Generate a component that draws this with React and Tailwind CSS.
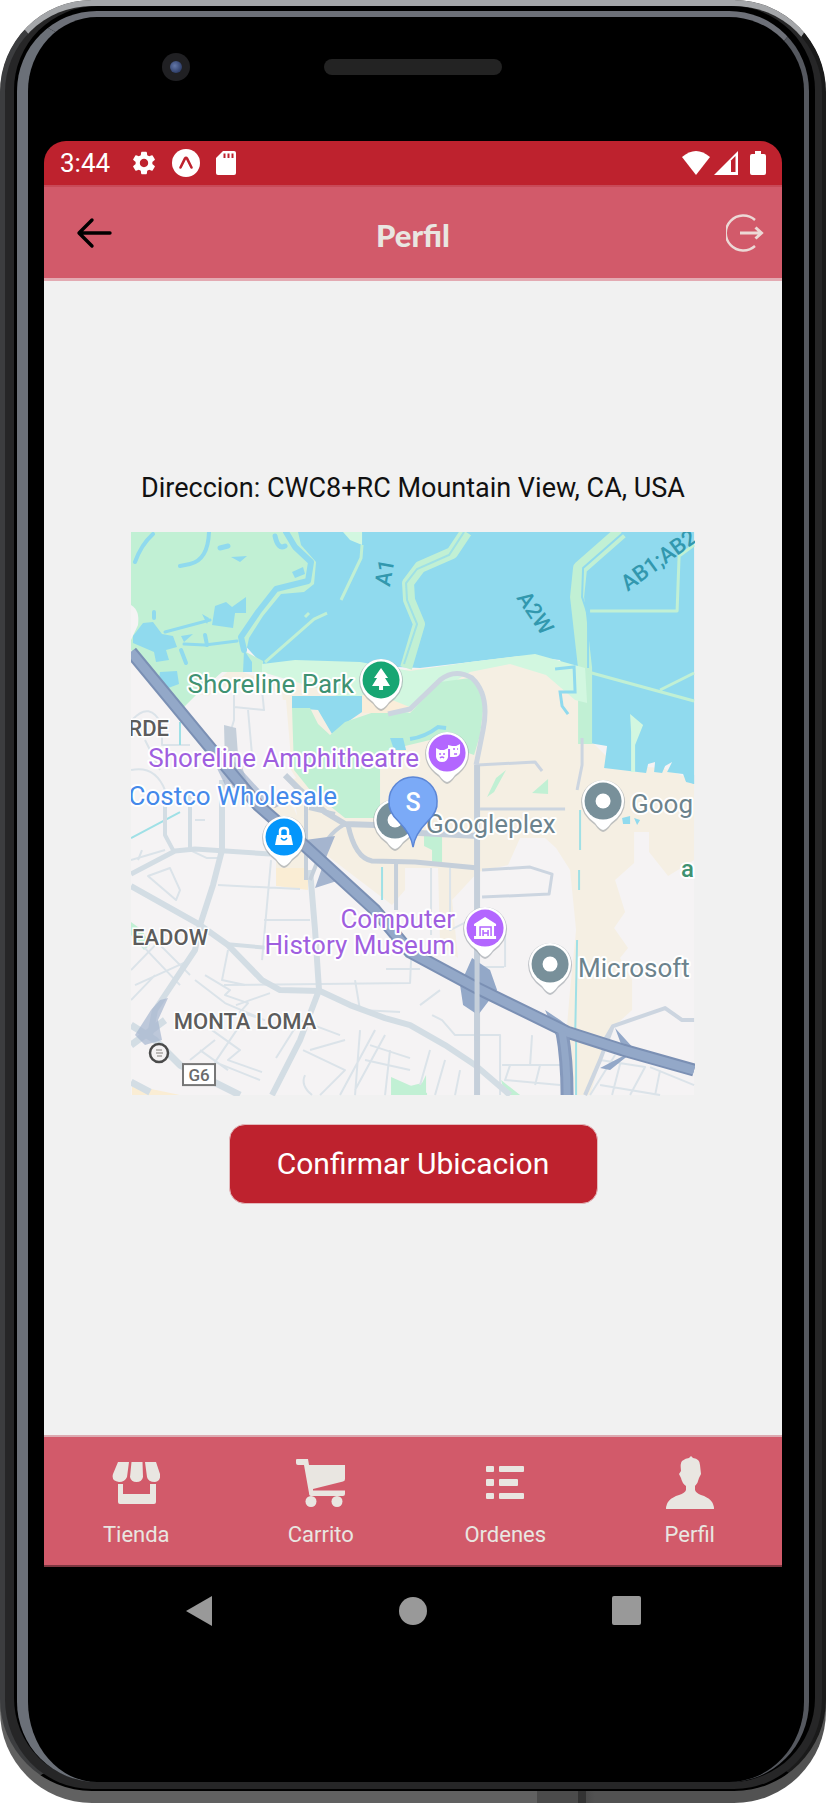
import React from "react";
import { MdSettings } from "react-icons/md";

function StatusBar() {
  return (
    <div className="flex h-11 items-center justify-between bg-[#be222e] px-4 text-white">
      <div className="flex items-center">
        <span className="text-[26px] leading-8">3:44</span>
        <MdSettings className="ml-5 size-7" aria-hidden="true" />
        <svg className="ml-3.5 size-7" viewBox="0 0 28 28" aria-hidden="true">
          <circle cx="14" cy="14" r="14" fill="#fff" />
          <path d="M8.500 18.500 L13 9.500 Q14 8 15 9.500 L19.500 18.500" fill="none" stroke="#be222e" strokeWidth="2.600" strokeLinecap="round" />
        </svg>
        <svg className="ml-4 h-6 w-5" viewBox="0 0 20 24" aria-hidden="true">
          <path d="M7 0H18Q20 0 20 2V22Q20 24 18 24H2Q0 24 0 22V7Z" fill="#fff" />
          <path d="M8.500 2.500V7M12.500 2.500V7M16.500 2.500V7" stroke="#be222e" strokeWidth="2" />
        </svg>
      </div>
      <div className="flex items-center">
        <svg className="h-6 w-7" viewBox="0 0 28 24" aria-hidden="true">
          <path d="M0 6Q14 -6 28 6L14 24Z" fill="#fff" />
        </svg>
        <svg className="ml-1 size-6" viewBox="0 0 24 24" aria-hidden="true">
          <path d="M24 0V24H0Z" fill="#fff" />
          <path d="M17 9.500L21.500 5V21H17Z" fill="#be222e" />
        </svg>
        <svg className="ml-3 h-6 w-4" viewBox="0 0 16 24" aria-hidden="true">
          <path d="M5 0H11V3H14Q16 3 16 5V22Q16 24 14 24H2Q0 24 0 22V5Q0 3 2 3H5Z" fill="#fff" />
        </svg>
      </div>
    </div>
  );
}

function Header() {
  return (
    <header className="grid h-24 grid-cols-[1fr_auto_1fr] items-center border-t-2 border-b-3 border-t-[#c84a58] border-b-[#e3aab2] bg-[#d25a6a] px-4">
      <button type="button" aria-label="Volver" className="ml-4 justify-self-start">
        <svg className="h-8 w-9" viewBox="0 0 36 32">
          <path d="M34 16H4M16 3L3 16L16 29" fill="none" stroke="#000" strokeWidth="3.400" strokeLinecap="round" strokeLinejoin="round" />
        </svg>
      </button>
      <h1 className="pt-1 font-['Lato'] text-[31px] leading-9 font-black text-[#e9e6e1]">Perfil</h1>
      <button type="button" aria-label="Cerrar sesión" className="justify-self-end">
        <svg className="size-10" viewBox="0 0 40 40">
          <path d="M29 7A17.500 17.500 0 1 0 29 33" fill="none" stroke="#ecd9d6" strokeWidth="2.400" />
          <path d="M14 20H35M29.500 14.500L35.500 20L29.500 25.500" fill="none" stroke="#ecd9d6" strokeWidth="3" />
        </svg>
      </button>
    </header>
  );
}

function Pin({ x, y, color, children }) {
  return (
    <g transform={`translate(${x} ${y})`}>
      <path d="M0 31Q-4 30 -8 24Q-22 14 -22 1A22 22 0 1 1 22 1Q22 14 8 24Q4 30 0 31Z" fill="#9aa0a6" opacity="0.600" />
      <path d="M0 29Q-4 28 -8 22Q-21 13 -21 0A21 21 0 1 1 21 0Q21 13 8 22Q4 28 0 29Z" fill="#fff" />
      <circle r="18.500" fill={color} />
      {children}
    </g>
  );
}

function MapView() {
  return (
    <svg
      role="img"
      aria-label="Mapa de Mountain View"
      viewBox="131 532 563 563"
      className="mt-7 block w-[76.300%] font-['Roboto',sans-serif]"
    >
      <rect x="131" y="532" width="563" height="563" fill="#f5f3f4" />

      {/* Commercial and campus ground */}
      <g fill="#f5efe3">
        <path d="M292 690L300 672L380 672L470 664L520 654L590 690L585 735L615 765L662 768L694 780V860L668 876L649 852V832H634V863L615 880L625 912L614 928L628 948L620 958L632 980V1010L610 1030L590 1095H575L567 1025L570 990L576 930L570 870L556 848L545 838H520L508 865L478 872L452 900L458 958L440 945L438 868H405V890L392 905L300 835L290 770Z" />
        <path d="M256 808L276 820V868L308 890V840L290 800Z" />
        <path d="M200 695L232 668L292 690V770L286 700Z" />
      </g>
      <path d="M276 868H308V890L276 886Z" fill="#faedd4" />
      <path d="M205 700L218 686L282 692L288 765L296 778L250 800L196 735L184 706Z" fill="#f5f3f4" />
      <path d="M132 1085L180 1095H132Z" fill="#faedd4" />

      {/* Bay */}
      <path d="M240 532H694V784L686 782L683 774L667 772L672 762L665 766L662 773L654 772L655 762L648 764L646 773L604 768L607 746L583 742L585 705L566 680L560 660L520 656L420 668L330 664L262 664L240 640Z" fill="#90daee" />
      {/* Marshes west */}
      <path d="M131 532H298L301 545L316 562L314 584L304 592L281 594L263 616L249 638L246 652L263 661V672H222L195 696L184 707L131 650Z" fill="#c1f0d4" />
      <path d="M131 605Q140 610 138 625L131 640Z" fill="#f5f3f4" />
      <g fill="none" stroke="#90daee" strokeLinecap="round" strokeLinejoin="round">
        <path d="M286 532L295 547L311 562L308 581L276 589L258 612L241 637L244 650" strokeWidth="6" />
        <path d="M135 562Q141 545 153 534" strokeWidth="4" />
        <path d="M209 532Q208 560 190 564L180 566" strokeWidth="4" />
        <path d="M237 641L205 645L184 644M165 632L210 620" strokeWidth="3" />
        <path d="M275 536Q278 550 285 546M220 548L228 546" strokeWidth="5" />
        <path d="M154 612V618M181 650L186 663M205 635L207 645" strokeWidth="4" />
      </g>
      <g fill="#90daee">
        <path d="M215 606L226 602L232 607L246 597V613H235L233 628L212 625Z" />
        <path d="M133 636L143 623L153 622L162 634L173 636L177 647L166 650L169 660L156 662L154 652L133 643Z" />
        <path d="M160 672L177 671L179 684L163 690L158 684Z" />
        <path d="M231 557L247 556L240 562ZM181 636L193 634L184 642ZM202 614L209 618L207 624Z" />
      </g>
      {/* Levees */}
      <path d="M292 572L303 567L305 574L295 578Z" fill="#90daee" />
      <g fill="none" stroke="#c1f0d4" strokeLinejoin="round">
        <path d="M362 545L361 558L341 600M327 613L314 619L265 662" strokeWidth="3" />
        <path d="M305 617L309 613" strokeWidth="3" />
        <path d="M466 532L452 553L420 567L408 583L409 600L419 624L406 668" strokeWidth="12" />
        <path d="M621 532L580 568L577 597L585 668V744" strokeWidth="14" />
        <path d="M590 611H677L679 556L694 545M588 672L694 701M660 690L694 673" strokeWidth="3" />
      </g>
      <g fill="none" stroke="#90daee" strokeWidth="2">
        <path d="M464 532L449 555L417 569L406 583L407 600L417 624L404 664" opacity="0.700" />
        <path d="M624 532L583 568L582 597L588 615V668M582 675V700" />
      </g>
      <path d="M343 532H362V545L350 540Z" fill="#d2f7e0" />
      <path d="M630 714L643 725L635 745V772H631V732Z" fill="#d2f7e0" />

      {/* Parks along the shore */}
      <path d="M262 664L295 660L360 662L410 671L470 662L535 654L585 668L587 703L575 700L546 675L510 664L470 672L440 690L405 715L360 710L330 692L262 672Z" fill="#d2f7e0" />
      <path d="M244 650L252 662V672H243Z" fill="#90daee" />
      <path d="M292 696H362V712L346 723L332 734L318 710L292 708Z" fill="#90daee" />
      <path d="M292 708L310 708L318 724L330 735L345 722L380 710L410 713L440 682L470 678L485 695L480 735L474 755L430 740L380 752V818L345 818L310 790L294 770Z" fill="#c1f0d4" />
      <path d="M362 695H380L412 708L400 713L362 713Z" fill="#faedd9" />
      <path d="M390 738H403L406 750H394Z" fill="#90daee" />
      <path d="M410 739Q425 737 438 727L446 728" fill="none" stroke="#90daee" strokeWidth="4" />
      <path d="M555 669L574 667L575 692H560L562 706L568 714" fill="none" stroke="#90daee" strokeWidth="3" />
      <g fill="#c1f0d4">
        <path d="M424 836H442V862H432V850L424 846Z" />
        <path d="M487 797L496 778L506 770L494 792ZM532 793L548 779V794Z" />
        <path d="M391 1077L427 1093V1095H391ZM410 1086L422 1083L426 1075V1095H410ZM501 1080L520 1095H505Z" />
        <path d="M131 922L142 930L150 945L144 950L131 935Z" />
      </g>
      <path d="M622 818L630 816V824H623ZM634 818L640 820L637 825ZM685 780L694 775V784Z" fill="#90daee" />

      {/* Small streets */}
      <g fill="none" stroke="#dbe3e9" strokeWidth="2" strokeLinejoin="round">
        <path d="M234 690V720L222 760M234 707L264 710L262 690M248 710L252 755L232 780" />
        <path d="M132 720Q150 700 162 725V745H190M131 770Q155 765 165 790M145 740L160 770" />
        <path d="M271 860L262 960M218 885L300 889M264 920H310M224 985L410 983L412 938M131 860L165 850" />
        <path d="M148 876L170 868L180 890L176 900ZM138 860L142 850M190 792V850L207 858H220M195 820H205" />
        <path d="M131 970L165 935M135 985L190 960M142 945L180 985M131 1000L155 975M160 945L190 975" />
        <path d="M205 975L230 990L225 995L248 1003L240 1012L265 1020M195 980L225 1003L260 1018M228 950L222 980L245 985M236 1005L270 993M212 1030L240 1050L228 1060L262 1072M200 1050L228 1070M240 1025L215 1062L260 1080M190 1060L215 1040" />
        <path d="M276 1058L300 1020L340 1035M303 1050L345 1070L320 1095M305 1075Q300 1085 312 1095M345 1040L310 1050M360 1030L355 1095M375 1030L340 1095M385 1035L355 1090M370 1045L410 1058M365 1060L410 1070" />
        <path d="M355 980L360 1010L400 1012M386 969H420M390 1050L385 1095M420 1005L440 990M432 1015L442 1020L455 1035H500V1095M532 1035L530 1065M502 1065H560M430 1050L420 1085M445 1060L435 1095M460 1070L455 1095M510 1065L505 1080L560 1085M540 1065L535 1085" />
        <path d="M431 935V868M450 868V930L470 920M505 967V925M480 967H504" />
        <path d="M600 1060L645 1067L630 1095M615 1055L590 1095M650 1067L694 1085M600 1085L660 1095M660 1070L655 1095M620 1064L612 1095" />
      </g>
      <g fill="none" stroke="#ccd5e0" strokeLinejoin="round">
        <path d="M482 870L530 867L552 874L549 894L482 897" strokeWidth="3" />
        <path d="M477 765L535 762L542 771M480 809H565" strokeWidth="3" />
        <path d="M388 714L410 709L440 680Q455 668 472 678Q490 695 483 730L476 765" strokeWidth="5" />
        <path d="M582 738V765L577 790" strokeWidth="3" />
        <path d="M600 1048L613 1026L665 1008L682 1020L694 1020M612 1028L600 1060L585 1095" strokeWidth="4" />
      </g>
      <g fill="none" stroke="#9fe0e6" strokeWidth="2">
        <path d="M131 838L180 812M382 867V900M580 810V850M579 870V890M577 940L575 1040M576 1040V1095M180 722V745" />
      </g>

      {/* Arterials */}
      <g fill="none" stroke="#d3dde4" strokeLinejoin="round">
        <path d="M131 874L175 851L195 849L270 854" strokeWidth="5" />
        <path d="M222 780V850L213 885L200 925L195 950L155 1010L150 1035" strokeWidth="6" />
        <path d="M165 800V835L173 850M190 790V848" strokeWidth="4" />
        <path d="M131 886L197 923L228 945L262 980L280 990L320 991L350 1005L385 1018L410 1025L445 1045L475 1065L510 1095" strokeWidth="6" />
        <path d="M225 944L270 948" strokeWidth="4" />
        <path d="M310 870L315 930L319 990L300 1040L272 1095" strokeWidth="6" />
        <path d="M131 1025L155 1040L180 1065L240 1095M131 1045L165 1020M131 1082L150 1092" strokeWidth="7" />
      </g>
      <g fill="none" stroke="#c5cfda" strokeLinejoin="round">
        <path d="M285 775L300 790L325 812L345 824L375 825L400 832L478 836" strokeWidth="6" />
        <path d="M348 825Q355 858 372 861L415 862L478 868" strokeWidth="5" />
        <path d="M477 765V1095" strokeWidth="6" />
        <path d="M345 824Q325 835 318 860L310 880M306 800V880M396 862V910M309 808L335 814" strokeWidth="4" />
      </g>

      {/* Freeways */}
      <path d="M224 725L236 728L238 755L250 790L225 765Z" fill="#c5cfda" />
      <path d="M213 760L228 755L260 790L290 800L275 808L255 795L225 785ZM151 1010L160 1000L168 998L158 1020L162 1040L145 1045L135 1035Z" fill="#a5b5cf" opacity="0.700" />
      <path d="M305 840L335 836L325 860L340 880L315 888L322 868Z" fill="#a5b5cf" />
      <path d="M472 958L490 970L497 990L478 1015L463 1005L460 985ZM545 1010L560 1020L580 1035L560 1045ZM600 1068L625 1055L615 1028L635 1050L610 1070Z" fill="#93a8c8" />
      <g fill="none" strokeLinejoin="round">
        <path d="M131 652L208 745L258 805L305 846L375 910L410 952L477 988L567 1032L623 1050L694 1070" stroke="#7b90b4" strokeWidth="13" />
        <path d="M562 1032Q567 1060 567 1095" stroke="#8599bc" strokeWidth="13" />
        <path d="M131 652L208 745L258 805L305 846L375 910L410 952L477 988L567 1032L623 1050L694 1070" stroke="#93a8c8" strokeWidth="9" />
        <path d="M562 1032Q567 1060 567 1095" stroke="#93a8c8" strokeWidth="7" />
      </g>
      <path d="M477 955V1040" stroke="#c5cfda" strokeWidth="5" />

      {/* Pins */}
      <Pin x={381} y={680} color="#17a673">
        <path d="M0 -12L7 -2H4L9 6H2V10H-2V6H-9L-4 -2H-7Z" fill="#fff" />
      </Pin>
      <Pin x={447} y={753} color="#b366ff">
        <path d="M1 -8L5 -7L9 -7L13 -9V0Q12 4 7 4H3V-4H1Z" fill="#fff" />
        <path d="M-11 -5L-7 -3H-3L1 -5V4Q0 9 -5 9Q-10 9 -11 4Z" fill="#fff" />
        <path d="M-8 1H-6M-4 1H-2M-7 5Q-5 3 -3 5M6 -4H8M10 -4H11M7 1H10" stroke="#b366ff" strokeWidth="1.500" fill="none" />
      </Pin>
      <Pin x={284} y={837} color="#0496fb">
        <path d="M-7 -2H7L9 8H-9Z" fill="#fff" />
        <path d="M-4 -2V-6Q-4 -9 0 -9Q4 -9 4 -6V-2" fill="none" stroke="#fff" strokeWidth="2.500" />
        <path d="M-3 1Q0 5 3 1" fill="none" stroke="#0496fb" strokeWidth="1.500" />
      </Pin>
      <Pin x={395} y={820} color="#78909a"><circle r="7.500" fill="#fff" /></Pin>
      <Pin x={603} y={801} color="#78909a"><circle r="7.500" fill="#fff" /></Pin>
      <Pin x={550} y={964} color="#78909a"><circle r="7.500" fill="#fff" /></Pin>
      <Pin x={485} y={928} color="#b366ff">
        <path d="M-11 -4L0 -11L11 -4V-2H9V8H11V11H-11V8H-9V-2H-11Z" fill="#fff" />
        <path d="M-5 8V-1H6V8M-2 8V2M3 8V2M-2 5H3" stroke="#b366ff" strokeWidth="1.500" fill="none" />
      </Pin>

      {/* Place names */}
      <g fontSize="26" stroke="#fff" strokeWidth="4" strokeLinejoin="round" paintOrder="stroke">
        <text x="354" y="693" textAnchor="end" fill="#3f9272">Shoreline Park</text>
        <text x="419" y="767" textAnchor="end" fill="#9f5fdf">Shoreline Amphitheatre</text>
        <text x="337" y="805" textAnchor="end" fill="#4489ea">Costco Wholesale</text>
        <text x="455" y="928" textAnchor="end" fill="#9f5fdf">Computer</text>
        <text x="455" y="954" textAnchor="end" fill="#9f5fdf">History Museum</text>
        <text x="426" y="833" fill="#6c838d">Googleplex</text>
        <text x="631" y="813" fill="#6c838d">Goog</text>
        <text x="578" y="977" fill="#6c838d">Microsoft</text>
        <text x="681" y="877" fontSize="24" fontWeight="500" fill="#3f9272">a</text>
      </g>
      <g fontSize="22" fontWeight="500" fill="#5c5c5c" stroke="#fff" strokeWidth="3" paintOrder="stroke">
        <text x="169" y="736" textAnchor="end">RDE</text>
        <text x="208" y="945" textAnchor="end">EADOW</text>
        <text x="245" y="1029" textAnchor="middle">MONTA LOMA</text>
      </g>
      <g fontSize="22" fontWeight="500" fill="#3298ae" textAnchor="middle">
        <text transform="translate(392 574) rotate(-80)">A1</text>
        <text transform="translate(529 617) rotate(56)">A2W</text>
        <text transform="translate(663 566) rotate(-36)">AB1;AB2</text>
      </g>
      <circle cx="159" cy="1053" r="9" fill="#f4f2f3" stroke="#4a4a4a" strokeWidth="2.500" />
      <path d="M156 1050H162M156 1053H163M157 1056H162" stroke="#a8a5a3" strokeWidth="1.500" />
      <rect x="183" y="1064" width="32" height="21" fill="#fff" stroke="#777" strokeWidth="2" />
      <text x="199" y="1081" fontSize="17" fontWeight="500" fill="#6b6b6b" textAnchor="middle">G6</text>

      {/* Selected location */}
      <path d="M413 847Q411 834 399 822Q388 812 389 801A24 24 0 0 1 437 801Q438 812 427 822Q415 834 413 847Z" fill="#7baaf7" stroke="#5b86d6" strokeWidth="1.500" />
      <text x="413" y="811" fontSize="25" fontWeight="500" fill="#fff" textAnchor="middle">S</text>
    </svg>
  );
}

function ShopIcon() {
  return (
    <svg className="h-11 w-12" viewBox="0 0 48 44" fill="currentColor" aria-hidden="true">
      <path d="M6 1H17L15 16Q13 21 7 21Q-1 20 1 13ZM19.500 1H30.500L31 16Q30 21 24.500 21Q19 21 18 16ZM33 1H44L48 13Q49 20 43 21Q36 21 35 16Z" />
      <path d="M6 23H11V33H38V23H44V41Q44 43 42 43H8Q6 43 6 41Z" />
    </svg>
  );
}

function CartIcon() {
  return (
    <svg className="h-12 w-[50px]" viewBox="0 0 50 48" fill="currentColor" aria-hidden="true">
      <path d="M1 0H12L13 6H49V20Q49 22 47 22.500L17 30V31.500H49V35Q49 37 47 37H15Q13 37 13 34L8 6H2Q0 6 0 4V1Q0 0 1 0Z" />
      <circle cx="15" cy="42.500" r="5.500" />
      <circle cx="41" cy="42.500" r="5.500" />
    </svg>
  );
}

function ListIcon() {
  return (
    <svg className="h-[34px] w-[38px]" viewBox="0 0 38 34" fill="currentColor" aria-hidden="true">
      <rect x="0" y="0" width="8" height="6" rx="1" />
      <rect x="0" y="13" width="8" height="7" rx="1" />
      <rect x="0" y="27" width="8" height="6" rx="1" />
      <rect x="13" y="0" width="25" height="6" rx="1" />
      <rect x="13" y="13" width="19" height="7" rx="1" />
      <rect x="13" y="27" width="25" height="6" rx="1" />
    </svg>
  );
}

function UserIcon() {
  return (
    <svg className="h-[54px] w-[50px]" viewBox="0 0 50 54" fill="currentColor" aria-hidden="true">
      <path d="M26 0L28 2Q35 3 35 9L36 18L34 22Q33 27 30 30V34Q31 37 36 39Q49 43 49 53H1Q1 43 14 39Q20 37 21 34V30Q17 27 16 22L14 18L16 15Q15 7 17 5Q21 2 24 2Z" />
    </svg>
  );
}

const tabs = [
  { label: "Tienda", Icon: ShopIcon },
  { label: "Carrito", Icon: CartIcon },
  { label: "Ordenes", Icon: ListIcon },
  { label: "Perfil", Icon: UserIcon },
];

function TabBar() {
  return (
    <nav className="grid grid-cols-4 border-t-2 border-b-2 border-t-[#dcaab1] border-b-[#7d3640] bg-[#d25a6a] py-4">
      {tabs.map(({ label, Icon }) => (
        <a key={label} href="#" className="flex flex-col items-center text-[#e9e6e1]">
          <span className="flex h-15 items-center">
            <Icon />
          </span>
          <span className="mt-2 text-[22px] leading-7">{label}</span>
        </a>
      ))}
    </nav>
  );
}

function SystemNav() {
  return (
    <div className="grid grid-cols-3 justify-items-center px-12 py-7">
      <button type="button" aria-label="Atrás">
        <svg className="size-8" viewBox="0 0 32 32"><path d="M3 16L29 1V31Z" fill="#999" /></svg>
      </button>
      <button type="button" aria-label="Inicio">
        <svg className="size-8" viewBox="0 0 32 32"><circle cx="16" cy="16" r="14" fill="#999" /></svg>
      </button>
      <button type="button" aria-label="Recientes">
        <svg className="size-8" viewBox="0 0 32 32"><rect x="1" y="1" width="29" height="29" rx="2" fill="#999" /></svg>
      </button>
    </div>
  );
}

export default function App() {
  return (
    <div className="flex min-h-screen bg-white font-['Roboto',sans-serif]">
      <div className="flex flex-1 overflow-hidden rounded-[92px] bg-[linear-gradient(to_right,#616161_65%,#4b4b4b_65%,#4b4b4b_70%,#333_70%,#333_71%,#4b4b4b_71%,#525252_72%)] pb-3">
        <div className="flex flex-1 rounded-[92px] border-t-6 border-r-4 border-b-2 border-l-5 border-t-[#a4a6a9] border-r-[#1a1a1a] border-b-black border-l-[#3c3d3f] bg-[#262627] pr-[7px] pb-[7px] pl-[9px]">
          <div className="flex flex-1 rounded-[84px] bg-black pt-[5px] pr-[6px] pl-[3px]">
            <div className="flex flex-1 flex-col rounded-[80px] border-t-6 border-r-5 border-l-11 border-t-[#6d7078] border-r-[#55585f] border-l-[#6b7078] bg-black pr-[22px] pb-[127px] pl-4">
              <div className="grid h-[124px] grid-cols-[1fr_24%_1fr] items-start pt-9">
                <div className="flex pl-[118px]">
                  <span className="flex size-7 items-center justify-center rounded-full bg-[#202023]">
                    <span className="size-3 rounded-full bg-radial-[at_40%_40%] from-[#6478a8] to-[#18264e]" />
                  </span>
                </div>
                <div className="mt-1.5 h-4 rounded-full bg-[#232323]" />
              </div>
              <div className="flex flex-1 flex-col overflow-hidden rounded-t-[22px]">
                <StatusBar />
                <Header />
                <main className="flex flex-1 flex-col items-center justify-center bg-[#f1f1f1] pb-10">
                  <p className="text-[27px] leading-8 text-[#111]">Direccion: CWC8+RC Mountain View, CA, USA</p>
                  <MapView />
                  <button type="button" className="mt-7 h-20 w-1/2 rounded-2xl border border-[#e3b9bc] bg-[#be222e] text-[30px] leading-8 text-white">
                    Confirmar Ubicacion
                  </button>
                </main>
                <TabBar />
              </div>
              <SystemNav />
            </div>
          </div>
        </div>
      </div>
    </div>
  );
}
